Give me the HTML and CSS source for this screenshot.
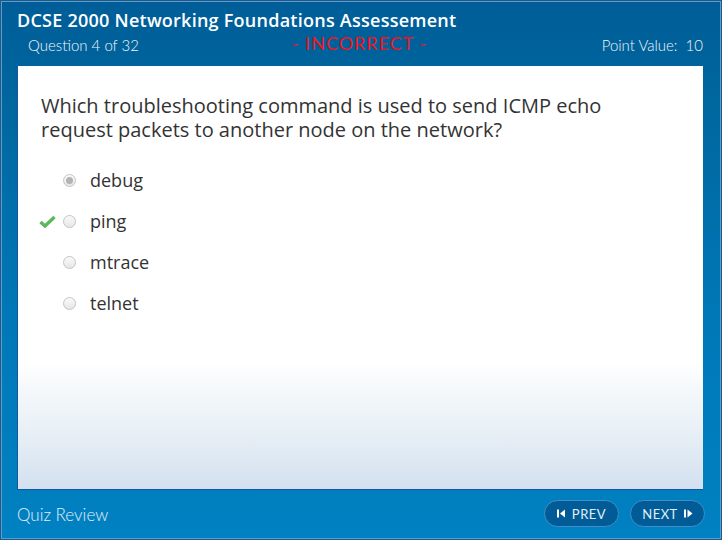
FILE: index.html
```html
<!DOCTYPE html>
<html>
<head>
<meta charset="utf-8">
<link rel="stylesheet" href="styles.css">
</head>
<body>
<div class="frame">
  <header class="header">
    <h1 class="title">DCSE 2000 Networking Foundations Assessement</h1>
    <div class="subrow">
      <span class="qnum">Question 4 of 32</span>
      <span class="status">- INCORRECT -</span>
      <span class="points">Point Value:&nbsp; 10</span>
    </div>
  </header>
  <main class="panel">
    <p class="question">Which troubleshooting command is used to send ICMP echo<br>request packets to another node on the network?</p>
    <ul class="options">
      <li class="option"><span class="mark"></span><span class="radio selected"></span><span class="label">debug</span></li>
      <li class="option"><span class="mark"><svg width="17" height="13" viewBox="0 0 17 13"><path d="M1.5 7 L6 11 L15.5 2" fill="none" stroke="#5cb85c" stroke-width="3.4" stroke-linejoin="miter"/></svg></span><span class="radio"></span><span class="label">ping</span></li>
      <li class="option"><span class="mark"></span><span class="radio"></span><span class="label">mtrace</span></li>
      <li class="option"><span class="mark"></span><span class="radio"></span><span class="label">telnet</span></li>
    </ul>
  </main>
  <footer class="footer">
    <span class="review">Quiz Review</span>
    <div class="nav">
      <button class="btn"><svg width="9" height="9" viewBox="0 0 9 9"><rect x="0" y="0.5" width="2" height="8" fill="#fff"/><path d="M8 0.5 L3 4.5 L8 8.5 Z" fill="#fff"/></svg>PREV</button>
      <button class="btn">NEXT<svg width="9" height="9" viewBox="0 0 9 9"><rect x="0" y="0.5" width="2" height="8" fill="#fff"/><path d="M3.5 0.5 L8.5 4.5 L3.5 8.5 Z" fill="#fff"/></svg></button>
    </div>
  </footer>
</div>
</body>
</html>
```

FILE: styles.css
```css
html, body {
  margin: 0;
  padding: 0;
}
body {
  width: 722px;
  height: 540px;
  overflow: hidden;
  font-family: "Lato", "Open Sans", sans-serif;
}
.frame {
  box-sizing: border-box;
  width: 722px;
  height: 540px;
  background: linear-gradient(to bottom, #005d98 0%, #00679f 20%, #0078b8 60%, #0081c1 100%);
  border: 1px solid #1c5a8a;
  box-shadow: inset 0 0 0 1px #5d9ccb;
  display: flex;
  flex-direction: column;
}
.header {
  padding: 8px 18px 0 16px;
  height: 58px;
  box-sizing: border-box;
  color: #fff;
}
.title {
  margin: 0;
  font-family: "Open Sans", sans-serif;
  font-size: 18px;
  font-weight: 600;
  line-height: 22px;
  letter-spacing: 0.25px;
}
.subrow {
  display: flex;
  align-items: center;
  justify-content: space-between;
  margin-top: 3px;
  height: 22px;
}
.qnum {
  font-size: 15px;
  font-weight: 300;
  padding-left: 11px;
  width: 200px;
  color: #f2f6fa;
}
.status {
  font-size: 18px;
  font-weight: 400;
  color: #f0141e;
  margin-top: -4px;
  margin-right: 12px;
  letter-spacing: 1px;
  white-space: pre;
}
.points {
  width: 200px;
  text-align: right;
  font-size: 15px;
  font-weight: 300;
  color: #f2f6fa;
}
.panel {
  margin-top: 7px;
  margin-left: 16px;
  width: 686px;
  height: 424px;
  box-sizing: border-box;
  background: linear-gradient(to bottom, #ffffff 0%, #ffffff 70%, #f3f7fa 78%, #e3ecf4 90%, #d3e0ef 100%);
  border-left: 1px solid #1456a0;
  border-bottom: 1px solid #1456a0;
  padding: 28px 24px 0 23px;
}
.question {
  margin: 0;
  font-family: "Open Sans", sans-serif;
  font-size: 20px;
  line-height: 24px;
  color: #333;
}
.options {
  list-style: none;
  margin: 18px 0 0 0;
  padding: 0;
}
.option {
  display: flex;
  align-items: center;
  height: 41px;
}
.mark {
  width: 23px;
  height: 14px;
  display: flex;
  align-items: center;
  margin-left: -2px;
}
.radio {
  box-sizing: border-box;
  width: 13px;
  height: 13px;
  border-radius: 50%;
  border: 1px solid #c4c4c4;
  background: linear-gradient(to bottom, #fafafa, #e6e6e6);
  margin-left: 1px;
  display: flex;
  align-items: center;
  justify-content: center;
}
.radio.selected::after {
  content: "";
  width: 7px;
  height: 7px;
  border-radius: 50%;
  background: #b3b3b3;
}
.label {
  margin-left: 14px;
  font-family: "Open Sans", sans-serif;
  font-size: 18px;
  color: #333;
  margin-top: -1px;
}
.footer {
  flex: 1;
  display: flex;
  align-items: center;
  justify-content: space-between;
  padding: 0 16px 4px 16px;
}
.review {
  color: #e2eef7;
  font-size: 17px;
  font-weight: 300;
  margin-top: 3px;
}
.nav {
  display: flex;
  gap: 11px;
  margin-top: 2px;
}
.btn {
  height: 27px;
  width: 75px;
  border-radius: 14px;
  border: 1px solid #3f90c8;
  background: #005b96;
  color: #e2eef7;
  font-family: "Lato", sans-serif;
  font-size: 13px;
  letter-spacing: 0.5px;
  display: flex;
  align-items: center;
  justify-content: center;
  gap: 6px;
  padding: 0;
}
```
